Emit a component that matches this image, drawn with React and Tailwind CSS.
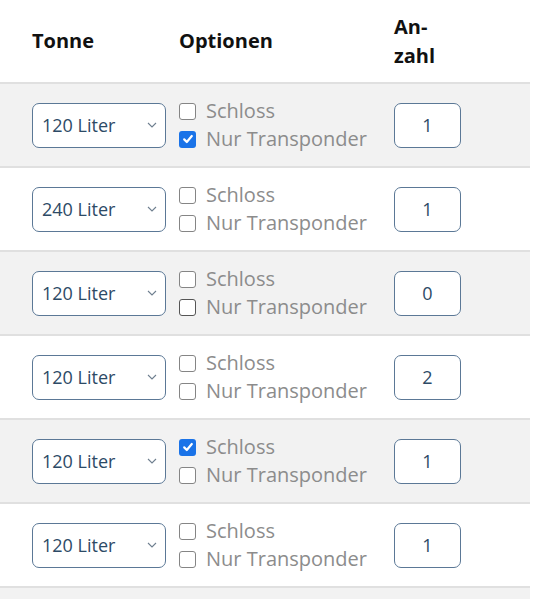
import React from 'react'

const rows = [
  { size: '120 Liter', lock: false, transponder: true, count: 1 },
  { size: '240 Liter', lock: false, transponder: false, count: 1 },
  { size: '120 Liter', lock: false, transponder: false, count: 0, darkBox: true },
  { size: '120 Liter', lock: false, transponder: false, count: 2 },
  { size: '120 Liter', lock: true, transponder: false, count: 1 },
  { size: '120 Liter', lock: false, transponder: false, count: 1 },
]

const Checkbox = ({ checked, dark }) => {
  if (checked) {
    return (
      <span className="flex h-[17px] w-[17px] items-center justify-center rounded-[3px] bg-[#1a73e8]">
        <svg viewBox="0 0 12 12" className="h-[12px] w-[12px]">
          <path d="M2.2 6.4 L4.8 9 L9.8 3" fill="none" stroke="#fff" strokeWidth="2.2" strokeLinecap="round" strokeLinejoin="round" />
        </svg>
      </span>
    )
  }
  return (
    <span
      className={
        dark
          ? 'h-[17px] w-[17px] rounded-[3px] border-[1.5px] border-[#555] bg-white'
          : 'h-[17px] w-[17px] rounded-[3px] border-[1.5px] border-[#858585] bg-white'
      }
    />
  )
}

const Option = ({ label, checked, dark }) => (
  <div className="flex h-[28px] items-center gap-[10px]">
    <Checkbox checked={checked} dark={dark} />
    <span className="text-[20px] text-[#8c8c8c]">{label}</span>
  </div>
)

const Row = ({ row, striped }) => (
  <div
    className={
      striped
        ? 'flex h-[84px] items-center border-b-2 border-[#e0e0e0] bg-[#f2f2f2]'
        : 'flex h-[84px] items-center border-b-2 border-[#e0e0e0] bg-white'
    }
  >
    <div className="w-[179px] pl-[32px]">
      <div className="flex h-[45px] w-[134px] items-center justify-between rounded-[7px] border-[1.5px] border-[#5b7896] bg-white pl-[9px] pr-[8px]">
        <span className="text-[18px] text-[#2d4a66]">{row.size}</span>
        <svg viewBox="0 0 10 6" className="h-[6px] w-[10px]">
          <path d="M1 1 L5 5 L9 1" fill="none" stroke="#6f7f8f" strokeWidth="1.1" />
        </svg>
      </div>
    </div>
    <div className="flex w-[215px] flex-col">
      <Option label="Schloss" checked={row.lock} />
      <Option label="Nur Transponder" checked={row.transponder} dark={row.darkBox} />
    </div>
    <div>
      <div className="flex h-[45px] w-[67px] items-center justify-center rounded-[7px] border-[1.5px] border-[#5b7896] bg-white">
        <span className="text-[18px] text-[#2d4a66]">{row.count}</span>
      </div>
    </div>
  </div>
)

export default function App() {
  return (
    <div className="h-[599px] overflow-hidden bg-white font-['Open_Sans',sans-serif]">
      <div className="w-[530px]">
        <div className="flex h-[84px] items-center border-b-2 border-[#e0e0e0] text-[20px] font-bold text-[#111]">
          <div className="w-[179px] pl-[32px]">Tonne</div>
          <div className="w-[215px]">Optionen</div>
          <div className="leading-[29px]">
            An-
            <br />
            zahl
          </div>
        </div>
        {rows.map((row, i) => (
          <Row key={i} row={row} striped={i % 2 === 0} />
        ))}
        <div className="h-[84px] bg-[#f2f2f2]" />
      </div>
    </div>
  )
}
